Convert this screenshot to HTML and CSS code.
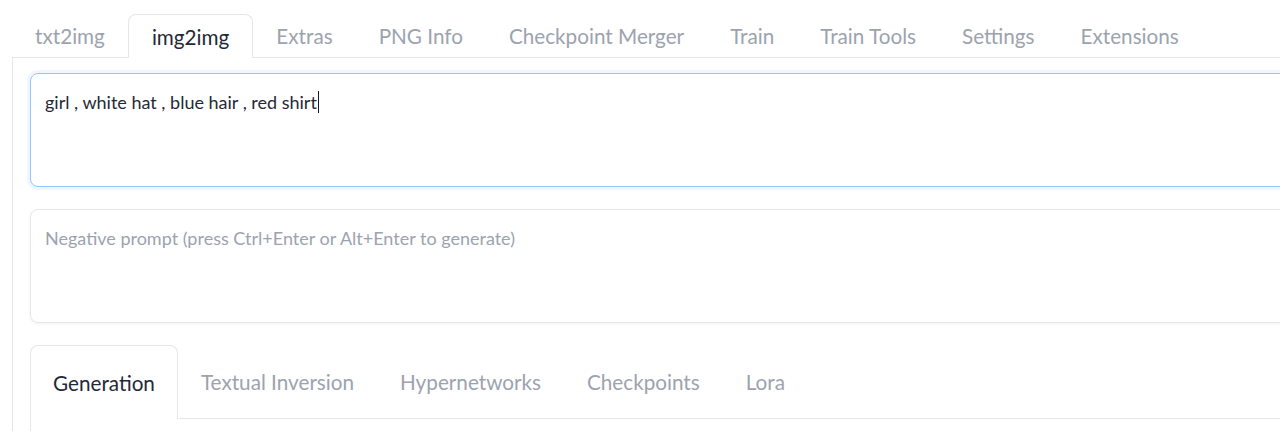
FILE: index.html
```html
<!DOCTYPE html>
<html lang="en">
<head>
<meta charset="utf-8">
<title>img2img</title>
<link rel="stylesheet" href="styles.css">
</head>
<body>
<div class="app">
  <nav class="tabs">
    <div class="tab">txt2img</div>
    <div class="tab active">img2img</div>
    <div class="tab">Extras</div>
    <div class="tab">PNG Info</div>
    <div class="tab">Checkpoint Merger</div>
    <div class="tab">Train</div>
    <div class="tab">Train Tools</div>
    <div class="tab">Settings</div>
    <div class="tab">Extensions</div>
  </nav>
  <section class="panel">
    <div class="field focused"><span class="value">girl , white hat , blue hair , red shirt</span><span class="caret"></span></div>
    <div class="field"><span class="placeholder">Negative prompt (press Ctrl+Enter or Alt+Enter to generate)</span></div>
    <div class="subtabs">
      <div class="subtab active">Generation</div>
      <div class="subtab">Textual Inversion</div>
      <div class="subtab">Hypernetworks</div>
      <div class="subtab">Checkpoints</div>
      <div class="subtab">Lora</div>
    </div>
    <div class="subpanel"></div>
  </section>
</div>
</body>
</html>
```
FILE: styles.css
```css
html, body {
  margin: 0;
  padding: 0;
  background: #ffffff;
  overflow: hidden;
}
body {
  font-family: "Lato", "Liberation Sans", sans-serif;
  width: 1280px;
  height: 431px;
}
.app {
  padding: 14px 0 0 12px;
  width: 1320px;
}
.tabs {
  display: flex;
  border-bottom: 1px solid #e5e7eb;
  height: 43px;
}
.tab {
  padding: 0 22px;
  height: 43px;
  display: flex;
  align-items: center;
  font-size: 20.7px;
  color: #9ca3af;
  border: 1px solid transparent;
  border-bottom: none;
  border-radius: 8px 8px 0 0;
  box-sizing: border-box;
  white-space: nowrap;
}
.tab.active {
  color: #1f2937;
  border-color: #e5e7eb;
  background: #fff;
  height: 44px;
  margin-bottom: -1px;
  padding: 0 23px;
}
.panel {
  border-left: 1px solid #e5e7eb;
  padding: 15px 0 0 17px;
  display: flex;
  flex-direction: column;
  gap: 22px;
}
.field {
  height: 114px;
  box-sizing: border-box;
  border: 1px solid #e5e7eb;
  border-radius: 8px;
  padding: 16px 14px;
  font-size: 18px;
  line-height: 24px;
  box-shadow: 0 1px 3px rgba(0, 0, 0, 0.06);
  display: flex;
  align-items: flex-start;
}
.field.focused {
  border-color: #93c5fd;
  box-shadow: 0 0 0 3px #eff6ff, 0 1px 3px rgba(0, 0, 0, 0.06);
}
.value {
  color: #1f2937;
}
.caret {
  display: inline-block;
  width: 1px;
  height: 22px;
  margin-top: 1px;
  margin-left: 1px;
  background: #111827;
}
.placeholder {
  color: #9ca3af;
  font-size: 18px;
}
.subtabs {
  display: flex;
  border-bottom: 1px solid #e5e7eb;
  height: 73px;
}
.subtab {
  padding: 0 22px;
  height: 73px;
  display: flex;
  align-items: center;
  font-size: 20.7px;
  color: #9ca3af;
  border: 1px solid transparent;
  border-bottom: none;
  border-radius: 8px 8px 0 0;
  box-sizing: border-box;
  white-space: nowrap;
}
.subtab.active {
  color: #1f2937;
  border-color: #e5e7eb;
  background: #fff;
  height: 74px;
  margin-bottom: -1px;
}
.subpanel {
  margin-top: -22px;
  height: 40px;
  border-left: 1px solid #e5e7eb;
}
```
